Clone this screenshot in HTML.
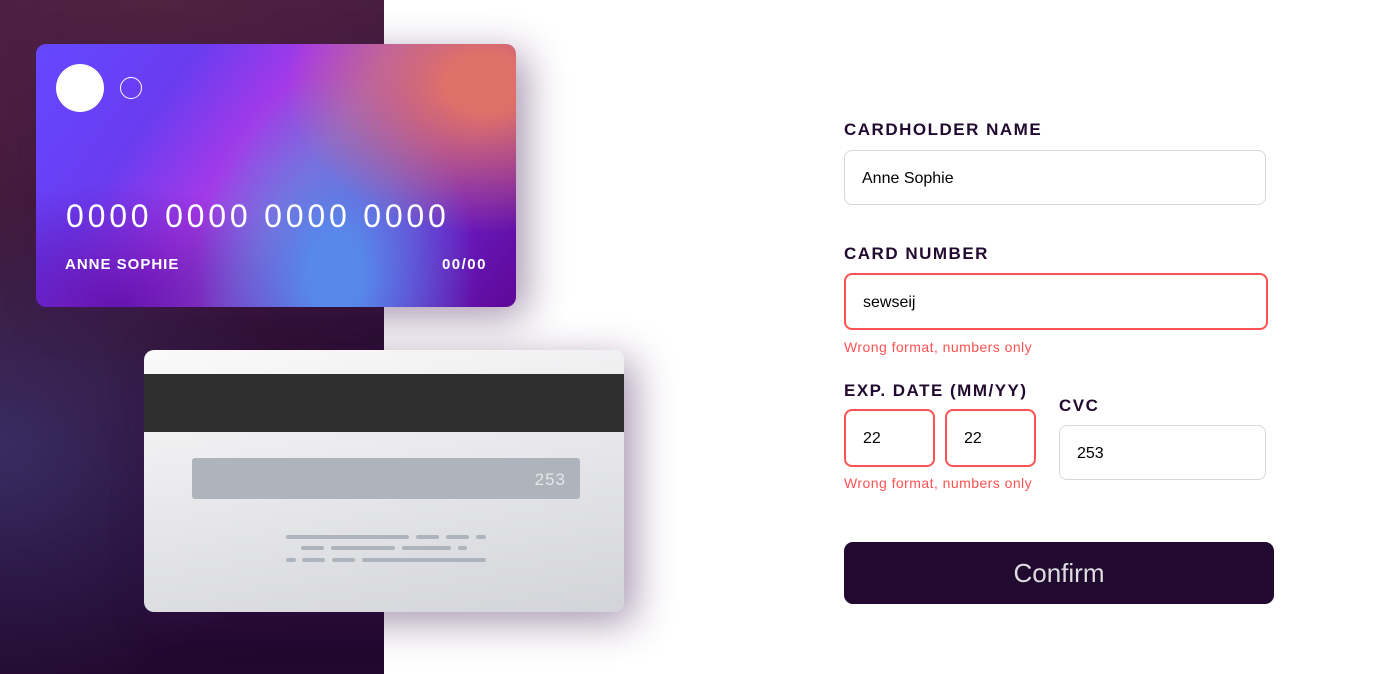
<!DOCTYPE html>
<html><head><style>
body{margin:0;width:1374px;height:674px;overflow:hidden;background:#fff;font-family:"Liberation Sans",sans-serif;position:relative}
.left{position:absolute;left:0;top:0;width:384px;height:674px;background:
radial-gradient(ellipse 300px 250px at 0 450px,rgba(60,50,110,.8),transparent),
radial-gradient(ellipse 400px 300px at 150px 0,#4f2240,transparent),
linear-gradient(160deg,#4a1c48 0%,#3a1635 40%,#22092f 70%,#21082e 100%)}
.front{position:absolute;left:36px;top:44px;width:480px;height:263px;border-radius:10px;overflow:hidden;
background:
radial-gradient(ellipse 200px 150px at 450px 40px,rgba(228,115,100,.95) 20%,transparent),
radial-gradient(ellipse 140px 200px at 300px 230px,rgba(85,140,235,.95) 20%,transparent),
radial-gradient(ellipse 220px 120px at 80px 260px,rgba(95,15,170,.9),transparent),
linear-gradient(125deg,#6448ff 0%,#6a3cf0 25%,#a43ae8 42%,#9a55d0 55%,#6a1cc4 80%,#5f0897 100%);
box-shadow:10px 10px 40px rgba(60,20,80,.45);color:#fff}
.c1{position:absolute;left:20px;top:20px;width:48px;height:48px;border-radius:50%;background:#fff}
.c2{position:absolute;left:84px;top:33px;width:22px;height:22px;border-radius:50%;border:1px solid #fff;box-sizing:border-box}
.num{position:absolute;left:30px;top:154px;font-size:32px;letter-spacing:3.8px}
.nm{position:absolute;left:29px;top:212px;font-size:15px;font-weight:bold;letter-spacing:1px}
.ex{position:absolute;right:29px;top:212px;font-size:15px;font-weight:bold;letter-spacing:1.5px}
.back{position:absolute;left:144px;top:350px;width:480px;height:262px;border-radius:10px;overflow:hidden;
background:linear-gradient(170deg,#fafafa,#d3d4d9);box-shadow:10px 10px 40px rgba(60,20,80,.45)}
.stripe{position:absolute;left:0;top:24px;width:100%;height:58px;background:#2f2f2f}
.sig{position:absolute;left:48px;top:108px;width:388px;height:41px;border-radius:3px;background:#adb4bc;color:#e6e6e8;font-size:17px;text-align:right;box-sizing:border-box;padding:12px 14px 0 0;letter-spacing:1px}
.l{position:absolute;height:4px;border-radius:2px;background:#adb4bc}
.lab{position:absolute;font-size:17px;font-weight:bold;color:#21092f;letter-spacing:1.5px}
.in{position:absolute;box-sizing:border-box;border:1px solid #d8d8d8;border-radius:8px;font-size:16px;color:#000;padding-left:17px;display:flex;align-items:center;padding-top:2px}
.err{border:2px solid #ff5252;padding-left:17px}
.em{position:absolute;font-size:14px;color:#ff5252;letter-spacing:.45px}
.btn{position:absolute;left:844px;top:542px;width:430px;height:62px;border-radius:9px;background:#21092f;color:#dedddf;font-size:26px;display:flex;align-items:center;justify-content:center}
</style></head><body>
<div class="left"></div>
<div class="front"><div class="c1"></div><div class="c2"></div>
<div class="num">0000 0000 0000 0000</div><div class="nm">ANNE SOPHIE</div><div class="ex">00/00</div></div>
<div class="back"><div class="stripe"></div><div class="sig">253</div>
<div class="l" style="left:142px;top:185px;width:123px"></div><div class="l" style="left:272px;top:185px;width:23px"></div><div class="l" style="left:302px;top:185px;width:23px"></div><div class="l" style="left:332px;top:185px;width:10px"></div>
<div class="l" style="left:157px;top:196px;width:23px"></div><div class="l" style="left:187px;top:196px;width:64px"></div><div class="l" style="left:258px;top:196px;width:49px"></div><div class="l" style="left:314px;top:196px;width:9px"></div>
<div class="l" style="left:142px;top:208px;width:10px"></div><div class="l" style="left:158px;top:208px;width:23px"></div><div class="l" style="left:188px;top:208px;width:23px"></div><div class="l" style="left:218px;top:208px;width:124px"></div>
</div>
<div class="lab" style="left:844px;top:120px">CARDHOLDER NAME</div>
<div class="in" style="left:844px;top:150px;width:422px;height:55px">Anne Sophie</div>
<div class="lab" style="left:844px;top:244px">CARD NUMBER</div>
<div class="in err" style="left:844px;top:273px;width:424px;height:57px">sewseij</div>
<div class="em" style="left:844px;top:339px">Wrong format, numbers only</div>
<div class="lab" style="left:844px;top:381px">EXP. DATE (MM/YY)</div>
<div class="in err" style="left:844px;top:409px;width:91px;height:58px">22</div>
<div class="in err" style="left:945px;top:409px;width:91px;height:58px">22</div>
<div class="em" style="left:844px;top:475px">Wrong format, numbers only</div>
<div class="lab" style="left:1059px;top:396px">CVC</div>
<div class="in" style="left:1059px;top:425px;width:207px;height:55px">253</div>
<div class="btn">Confirm</div>
</body></html>
